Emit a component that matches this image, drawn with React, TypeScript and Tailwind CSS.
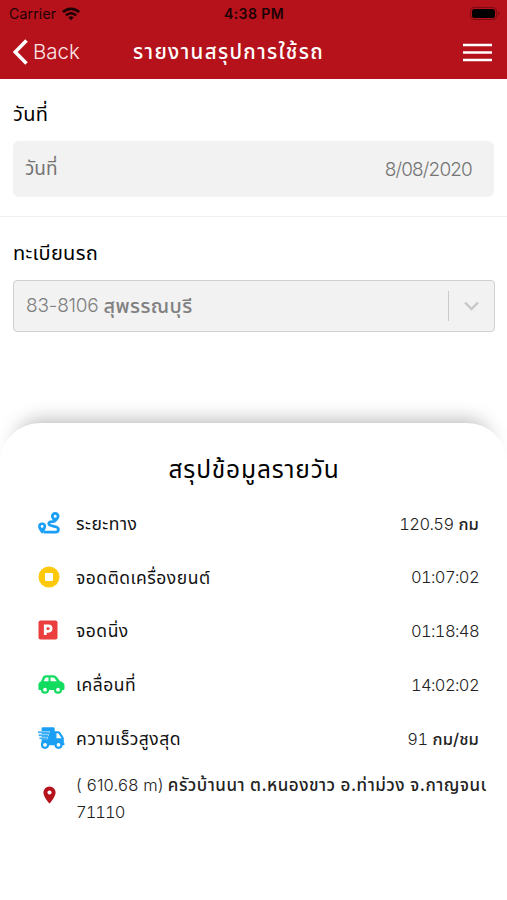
import type { ReactNode } from "react";

const RouteIcon = () => (
  <svg width="22" height="22" viewBox="0 0 22 22" fill="none">
    <path
      d="M16.500 9.600H14c-2.200 0-3.200.8-3.200 2.100 0 3.200 9.600 1.400 9.600 5.500 0 1.800-1 2.900-2.800 2.900H5.500"
      stroke="#1b9ff5"
      strokeWidth="2.800"
    />
    <path
      fillRule="evenodd"
      fill="#1b9ff5"
      d="M17.200 0a4.300 4.300 0 0 0-4.300 4.300c0 2.700 4.300 6.300 4.300 6.300s4.300-3.600 4.300-6.300A4.300 4.300 0 0 0 17.200 0Zm0 2.800a1.500 1.500 0 1 1 0 3 1.500 1.500 0 0 1 0-3Z"
    />
    <path
      fillRule="evenodd"
      fill="#1b9ff5"
      d="M4.100 10.400A4 4 0 0 0 .1 14.400c0 3 4 7.100 4 7.100s4-4.100 4-7.100a4 4 0 0 0-4-4Zm0 2.600a1.400 1.400 0 1 1 0 2.800 1.400 1.400 0 0 1 0-2.800Z"
    />
  </svg>
);

const StopIcon = () => (
  <svg width="22" height="22" viewBox="0 0 22 22">
    <circle cx="11" cy="11" r="10.500" fill="#fdc90a" />
    <rect x="7" y="7" width="8" height="8" rx="1" fill="#fff" />
  </svg>
);

const ParkingIcon = () => (
  <svg width="20" height="20" viewBox="0 0 20 20">
    <rect x="0.500" y="0.500" width="19" height="19" rx="2" fill="#eb3f3f" />
    <path
      d="M7.300 15V5.900h3.100a2.700 2.700 0 0 1 0 5.400H7.300"
      fill="none"
      stroke="#fff"
      strokeWidth="2.800"
    />
  </svg>
);

const CarIcon = () => (
  <svg width="27" height="19" viewBox="0 0 27 19">
    <path
      fillRule="evenodd"
      fill="#12dc60"
      d="M8 .3h7c1.800 0 3 .8 4 2l3 3.900c2.600.4 4.500 1.900 4.500 4.300v2.900c0 .9-.6 1.600-1.500 1.600H1.900c-.9 0-1.500-.7-1.500-1.600V9.800c0-1.500 1-2.700 2.500-3.200l1.800-4C5.300 1.100 6.500.3 8 .3Zm.5 2.100c-.8 0-1.300.4-1.600 1L5.800 6.200h4.700V2.400Zm4 0v3.800h6.300l-2-2.800c-.5-.7-1-1-1.800-1Z"
    />
    <circle cx="7" cy="14.700" r="3" fill="#fff" stroke="#12dc60" strokeWidth="2.200" />
    <circle cx="20" cy="14.700" r="3" fill="#fff" stroke="#12dc60" strokeWidth="2.200" />
  </svg>
);

const TruckIcon = () => (
  <svg width="27" height="22" viewBox="0 0 27 22">
    <path
      fillRule="evenodd"
      fill="#1b9ff5"
      d="M4.500.3h10.800c.8 0 1.400.6 1.400 1.400v2.500h3c1.200 0 2 .5 2.700 1.400l2.800 4.100c.4.600.6 1.200.6 2v4.200h.6v2.400H3.600V1.200c0-.5.4-.9.900-.9Zm14 6v4.900h5.100l-2.600-3.900c-.4-.6-.8-1-1.500-1Z"
    />
    <path d="M0 5.200h11.800M.6 8.200h10.300M1.400 11.200h8.400" stroke="#a9dcfb" strokeWidth="2.300" />
    <path d="M0 5.200h11M.8 8.200h9.300M1.600 11.200h7.400" stroke="#1b9ff5" strokeWidth="1.100" />
    <circle cx="7" cy="17.800" r="3" fill="#fff" stroke="#1b9ff5" strokeWidth="2.200" />
    <circle cx="20.500" cy="17.800" r="3" fill="#fff" stroke="#1b9ff5" strokeWidth="2.200" />
  </svg>
);

const PinIcon = () => (
  <svg width="14" height="18" viewBox="0 0 14 18">
    <path
      fillRule="evenodd"
      fill="#b5121b"
      d="M6.500.4A6.100 6.100 0 0 0 .4 6.500c0 4.500 6.100 11 6.100 11s6.100-6.500 6.100-11A6.100 6.100 0 0 0 6.500.4Zm0 4a2.100 2.100 0 1 1 0 4.200 2.100 2.100 0 0 1 0-4.200Z"
    />
  </svg>
);

type Row = { icon: ReactNode; label: string; value: string; unit?: string };

const rows: Row[] = [
  { icon: <RouteIcon />, label: "ระยะทาง", value: "120.59", unit: "กม" },
  { icon: <StopIcon />, label: "จอดติดเครื่องยนต์", value: "01:07:02" },
  { icon: <ParkingIcon />, label: "จอดนิ่ง", value: "01:18:48" },
  { icon: <CarIcon />, label: "เคลื่อนที่", value: "14:02:02" },
  { icon: <TruckIcon />, label: "ความเร็วสูงสุด", value: "91", unit: "กม/ชม" },
];

export default function App() {
  return (
    <main className="flex h-[900px] w-[507px] flex-col overflow-hidden bg-white font-['Inter','Noto_Sans_Thai',sans-serif] text-black">
      <header className="h-[79px] bg-[#b5121b]">
        <div className="grid h-[27px] grid-cols-3 items-center pr-[7px] pl-[9px] text-[14px] text-[#1c0204]">
          <div className="flex items-center gap-[6px]">
            <span className="tracking-[0.2px]">Carrier</span>
            <svg width="18" height="14" viewBox="0 0 18 14" fill="none" stroke="#1c0204" strokeWidth="2.600">
              <path d="M.9 5.200a11.500 11.500 0 0 1 16.200 0M3.900 8.300a7.200 7.200 0 0 1 10.200 0" />
              <path d="M9 13.200 6.300 10.500a3.900 3.900 0 0 1 5.400 0Z" fill="#1c0204" stroke="none" />
            </svg>
          </div>
          <span className="pr-px text-center font-semibold tracking-[0.4px]">4:38 PM</span>
          <svg className="justify-self-end" width="30" height="13" viewBox="0 0 30 13">
            <rect x="0.500" y="0.500" width="26" height="12" rx="3.500" fill="none" stroke="#7c0b12" />
            <rect x="2" y="2" width="23" height="9" rx="2.500" fill="#000" />
            <path d="M28 4.500v4c1-.4 1.500-1.200 1.500-2s-.5-1.600-1.500-2Z" fill="#7c0b12" />
          </svg>
        </div>
        <div className="flex h-[50px] items-center px-[13px] text-white">
          <button className="flex w-[120px] items-center gap-[5px]">
            <svg width="15" height="26" viewBox="0 0 15 26" fill="none" stroke="#fff" strokeWidth="3.600">
              <path d="M13.500 1.500 2.200 13l11.300 11.500" />
            </svg>
            <span className="text-[20.500px] font-light text-[#fbe6e7]">Back</span>
          </button>
          <h1 className="text-[20.500px] font-medium tracking-[1.35px] whitespace-nowrap">รายงานสรุปการใช้รถ</h1>
          <svg className="mr-[2px] ml-auto" width="29" height="19" viewBox="0 0 29 19" stroke="#fff" strokeWidth="2.400">
            <path d="M0 2h29M0 9.500h29M0 17h29" />
          </svg>
        </div>
      </header>

      <section className="h-[138px] border-b border-[#f0f0f0] px-[13px] pt-[20px]">
        <h2 className="h-[42px] text-[20px] leading-[30px] tracking-[0.3px]">วันที่</h2>
        <div className="flex h-[56px] items-center justify-between rounded-[6px] bg-[#f2f2f2] pr-[22px] pl-[12px] text-[19px] text-[#757575]">
          <span>วันที่</span>
          <span className="pt-[2px] font-light tracking-[-0.85px]">8/08/2020</span>
        </div>
      </section>

      <section className="h-[206px] px-[13px] pt-[21px]">
        <h2 className="h-[42px] text-[20px] leading-[30px] tracking-[0.3px]">ทะเบียนรถ</h2>
        <div className="flex h-[52px] w-[482px] items-center rounded-[4px] border border-[#d0d0d0] bg-[#f2f2f2] pl-[12px] text-[#808080]">
          <span className="pt-px text-[19px] font-light tracking-[-0.2px]">83-8106</span>
          <span className="ml-[5px] text-[20px] font-medium tracking-[0.4px]">สุพรรณบุรี</span>
          <span className="ml-auto h-[30px] w-px bg-[#cccccc]" />
          <svg className="mr-[15px] ml-[15px]" width="15" height="10" viewBox="0 0 15 10" fill="none" stroke="#c8c8c8" strokeWidth="2.400">
            <path d="M1 1.500 7.500 8 14 1.500" />
          </svg>
        </div>
      </section>

      <section className="grow rounded-t-[40px] bg-white pt-[28px] pr-[21px] pl-[38px] shadow-[0_-20px_20px_-18px_rgba(0,0,0,0.3)]">
        <h2 className="mb-[10px] h-[36px] pr-[16px] text-center text-[24.500px] leading-[36px] tracking-[0.85px]">
          สรุปข้อมูลรายวัน
        </h2>
        {rows.map((row) => (
          <div key={row.label} className="flex h-[53.800px] items-center pr-[7px] text-[17px] text-[#111]">
            <span className="w-[38px] pb-[2px]">{row.icon}</span>
            <span className="text-[17.500px] tracking-[0.5px]">{row.label}</span>
            <span className="ml-auto text-[16.500px] font-light tracking-[-0.6px] text-[#222] tabular-nums">
              {row.value}
              {row.unit && <span className="ml-[5px] font-medium tracking-[0.1px]">{row.unit}</span>}
            </span>
          </div>
        ))}
        <div className="flex items-center pt-[6px] text-[17px] leading-[27px] text-[#222]">
          <span className="w-[38px] shrink-0 pb-[8px] pl-[5px]"><PinIcon /></span>
          {/* long addresses run off the right edge of the first line */}
          <div className="w-[410px] overflow-hidden text-[16.500px] font-light">
            <p className="whitespace-nowrap">
              <span className="tracking-[0.2px]">( 610.68 m)</span>
              <span className="ml-[4px] text-[17px] font-medium tracking-[0.5px]">ครัวบ้านนา ต.หนองขาว อ.ท่าม่วง จ.กาญจนบุรี</span>
            </p>
            <p className="tracking-[-1px] tabular-nums">71110</p>
          </div>
        </div>
      </section>
    </main>
  );
}
